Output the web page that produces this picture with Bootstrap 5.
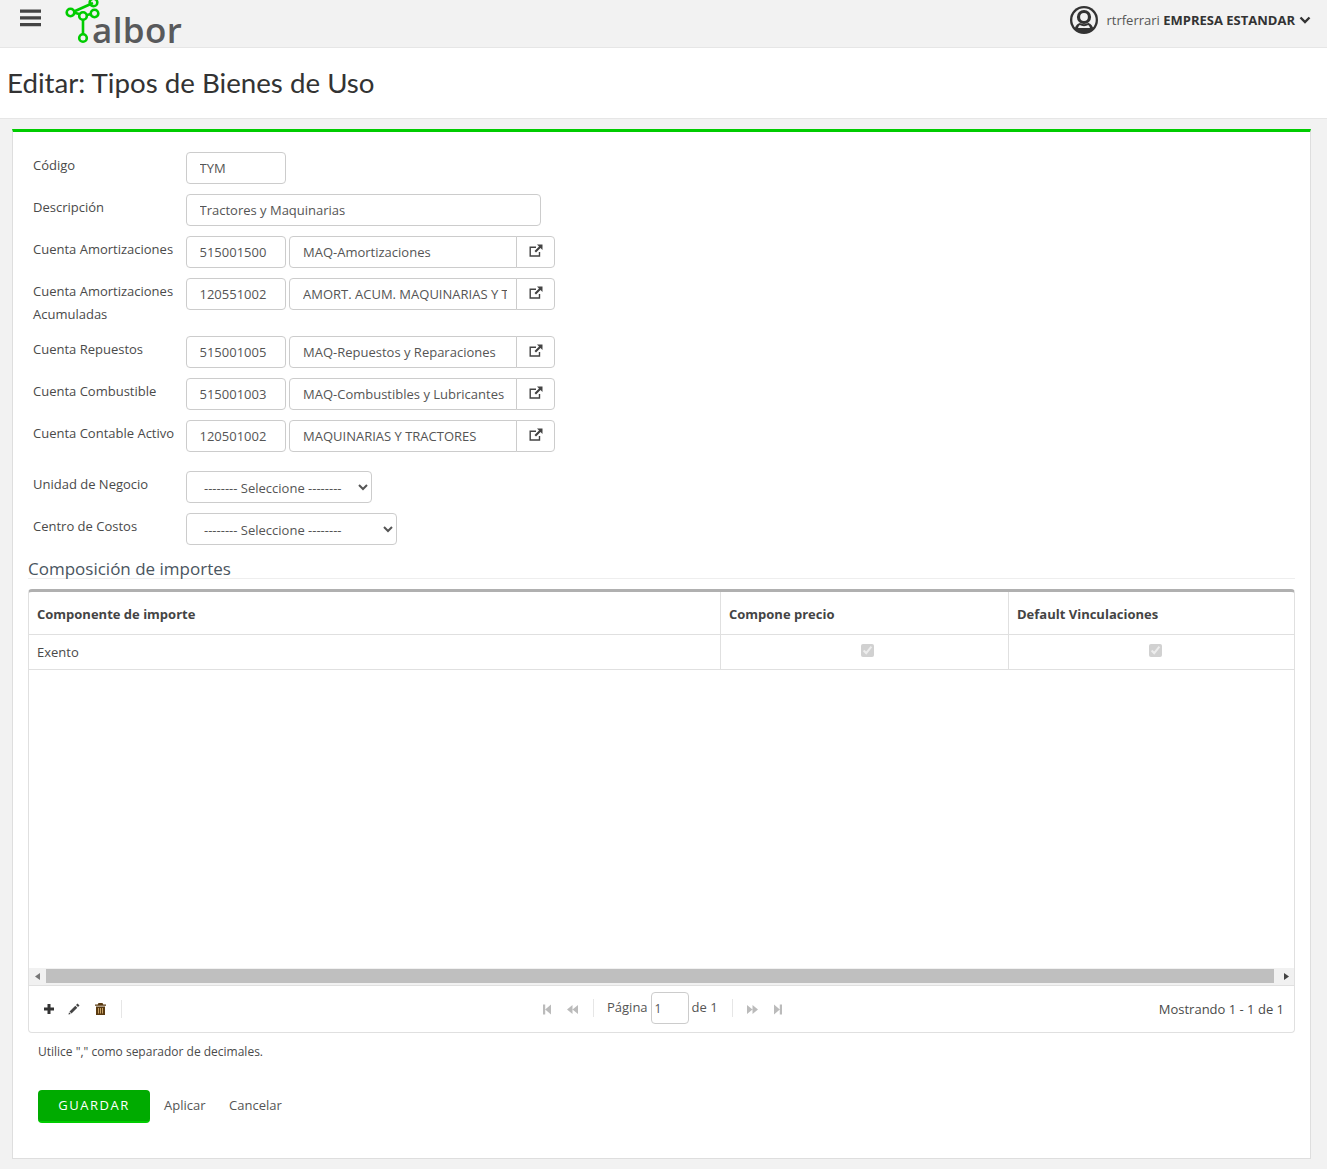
<!DOCTYPE html>
<html lang="es">
<head>
<meta charset="utf-8">
<title>Editar: Tipos de Bienes de Uso</title>
<link href="https://cdn.jsdelivr.net/npm/bootstrap@5.3.0/dist/css/bootstrap.min.css" rel="stylesheet">
<style>
html,body{height:1169px;overflow:hidden}
body{background:#f2f2f2;font-family:"Open Sans",sans-serif;font-size:13px;color:#4a4a4a;line-height:23px}
.top-bar{height:48px;background:#f2f2f2;border-bottom:1px solid #e6e6e6;padding-left:20px}
.burger{width:21px;height:18px;margin-top:9px;margin-right:24px;flex:none}
.logo-mark{width:40px;height:48px;flex:none}
.logo-word{font-family:"Open Sans",sans-serif;font-weight:600;font-size:35px;color:#58595b;line-height:35px;margin-left:-13px;padding-top:12px;letter-spacing:.4px}
.user-box{padding-right:16px;height:40px;color:#555}
.user-box b{color:#333;font-weight:700}
.chev{margin-left:-4px}
.title-band{height:71px;background:#fff;border-bottom:1px solid #e6e6e6;padding-left:7px}
.title-band h1{font-family:Lato,sans-serif;font-size:27.7px;font-weight:400;color:#333;line-height:70px;margin:0}
.sheet{margin:10px 16px 0 12px;height:1030px;background:#fff;border:1px solid #dedede;border-top:3px solid #00cc00;padding:20px 15px 0 15px;box-sizing:border-box}
.frow{display:flex;margin-bottom:10px;padding-left:5px}
.frow-gap{padding-top:9px}
.flabel{width:153px;flex:none;padding-top:2px;color:#4a4a4a}
.frow .form-control,.frow .form-select{height:32px;font-size:13px;color:#555;border:1px solid #ccc;border-radius:4px;padding:0 9px 0 13px;font-family:"Open Sans",sans-serif;box-shadow:none}
.frow .w-code,.frow .w-desc{padding-left:12.5px}
.w-code{width:100px;flex:none}
.w-desc{width:355px;flex:none}
.w-acct{width:266px;flex:none;margin-left:3px}
.w-acct .form-control{width:228px;flex:none;border-radius:4px 0 0 4px!important}
.ext-btn{width:39px;height:32px;border:1px solid #ccc;margin-left:-1px;border-radius:0 4px 4px 0;background:#fff;padding:0 0 3px 0;flex:none;line-height:0}
.frow .form-select{appearance:auto;-webkit-appearance:auto;background-image:none;background-color:#fff;padding:2px 0 0 13px}
.frow .sel-a{width:186px}
.frow .sel-b{width:211px}
.sect-title{font-size:17px;line-height:24px;color:#4a5560;border-bottom:1px solid #eee;height:22px;margin-top:12px;margin-bottom:10px}
.grid-wrap{border:1px solid #e0e0e0;border-top:3px solid #b0b0b0;border-radius:4px;height:444px;display:flex;flex-direction:column}
.grid-head,.grid-line{display:flex;border-bottom:1px solid #e0e0e0}
.grid-head{height:43px;font-weight:700;color:#444;align-items:center}
.grid-head>div{padding-top:2px}
.grid-line{height:35px}
.c1{width:692px;padding-left:8px;border-right:1px solid #e0e0e0;height:100%;flex:none;display:flex;align-items:center}
.c2{width:288px;padding-left:8px;border-right:1px solid #e0e0e0;height:100%;flex:none;display:flex;align-items:center}
.c3{flex:1;padding-left:8px;height:100%;display:flex;align-items:center}
.c2.chk-cell{justify-content:center;padding:0 0 4px 6px}
.c3.chk-cell{justify-content:center;padding:0 0 4px 8px}
.chk-cell input{width:13px;height:13px;margin:0}
.grid-empty{height:298px;flex:none}
.hscroll{height:18px;background:#f1f1f1;border-bottom:1px solid #e0e0e0;flex:none;padding:1px 0 2px 0}
.hscroll svg{width:17px;height:15px;flex:none}
.hthumb{flex:1;background:#bfbfbf;margin-right:3px}
.grid-foot{flex:1;padding:0 10px 0 14px;position:relative}
.foot-sep{width:1px;height:18px;background:#e6e6e6;flex:none}
.tools{gap:13px}
.trash-ic{margin-left:2px}
.tool-sep{margin-left:2px}
.pager{position:absolute;left:514px;top:5px;height:34px;color:#555}
.pager input{width:38px;height:32px;border:1px solid #ccc;border-radius:4px;padding:0 3px;font-size:12px;color:#555;margin:0 3px 0 3px}
.pg-one{width:8px;height:11px;flex:none;margin-top:2px}
.pg-two{width:11px;height:11px;flex:none;margin-top:2px}
.pg-prev{margin-left:16px}
.pg-last{margin-left:16px}
.sep-a{margin:0 13px 0 15px}
.sep-b{margin:0 14px 0 14px}
.pager span{margin-top:-2px}
.note{font-size:12px;padding:7px 0 0 10px;line-height:23px;color:#4a4a4a}
.btn-save{width:112px;height:33px;background:#00ab00;border:0;border-bottom:2px solid #00cc00;color:#fff;font-size:13px;letter-spacing:1.5px;border-radius:4px;padding:0 0 2px 0;line-height:24px}
.btn-save:hover{background:#00ab00;color:#fff}
.act-link{font-size:13px;color:#555;text-decoration:none;margin-top:-2px}
.actions{padding:27px 0 0 10px}
.act-one{margin-left:14px}
.act-two{margin-left:23.500px}
</style>
</head>
<body>
<header class="top-bar d-flex justify-content-between align-items-start">
  <div class="d-flex align-items-start">
    <svg class="burger" viewBox="0 0 21 18" aria-hidden="true"><path fill="#444" d="M0 .5h21v3.200H0zM0 7.200h21v3.200H0zM0 14h21v3.200H0z"/></svg>
    <svg class="logo-mark" viewBox="0 0 40 48" aria-hidden="true"><g fill="none" stroke="#00cc00" stroke-width="2.600"><path d="M9 11.500 28 3M9 12.500l5 1.500M22 15l4-1M18 19v15"/><circle cx="5.500" cy="12.500" r="3.800"/><circle cx="18" cy="16" r="3.800"/><circle cx="29.500" cy="13.500" r="3.800"/><circle cx="28.500" cy="2.500" r="3.800"/><circle cx="18" cy="38" r="3.800"/></g></svg>
    <span class="logo-word">albor</span>
  </div>
  <div class="user-box d-flex align-items-center gap-2">
    <svg width="28" height="28" viewBox="0 0 28 28" aria-hidden="true"><circle cx="14" cy="14" r="14" fill="#333"/><circle cx="14" cy="14" r="11.700" fill="#f2f2f2"/><circle cx="14" cy="11" r="5.500" fill="none" stroke="#333" stroke-width="3.200"/><path d="M4.500 23c1-4 4-6 5.500-6 2 1.500 6 1.500 8 0 1.500 0 4.500 2 5.500 6-5 5-14 5-19 0z" fill="#333"/><path d="M8 22c.500-2 1.500-3 2-3 2 1.500 6 1.500 8 0 .500 0 1.500 1 2 3z" fill="#f2f2f2"/></svg>
    <span>rtrferrari <b>EMPRESA ESTANDAR</b></span>
    <svg class="chev" width="12" height="8" viewBox="0 0 12 8" aria-hidden="true"><path d="M1.500 1.500 6 6l4.500-4.500" fill="none" stroke="#333" stroke-width="2.400"/></svg>
  </div>
</header>
<div class="title-band"><h1>Editar: Tipos de Bienes de Uso</h1></div>
<main class="sheet">
  <svg width="0" height="0" class="position-absolute" aria-hidden="true"><defs>
    <symbol id="ext" viewBox="0 0 14 14"><path d="M10.500 8v4H1.200V3.300H7" fill="none" stroke="#444" stroke-width="1.400"/><path d="M8 .5h5.500V6l-2-2L7 8.500 5.500 7 10 2.500z" fill="#444"/></symbol>
  </defs></svg>
  <div class="frow"><div class="flabel">Código</div><input class="form-control w-code" value="TYM"></div>
  <div class="frow"><div class="flabel">Descripción</div><input class="form-control w-desc" value="Tractores y Maquinarias"></div>
  <div class="frow"><div class="flabel">Cuenta Amortizaciones</div><input class="form-control w-code" value="515001500"><div class="w-acct d-flex"><input class="form-control" value="MAQ-Amortizaciones"><button class="ext-btn" type="button" aria-label="Abrir"><svg width="14" height="14"><use href="#ext"/></svg></button></div></div>
  <div class="frow"><div class="flabel">Cuenta Amortizaciones Acumuladas</div><input class="form-control w-code" value="120551002"><div class="w-acct d-flex"><input class="form-control" value="AMORT. ACUM. MAQUINARIAS Y TRACTORES"><button class="ext-btn" type="button" aria-label="Abrir"><svg width="14" height="14"><use href="#ext"/></svg></button></div></div>
  <div class="frow"><div class="flabel">Cuenta Repuestos</div><input class="form-control w-code" value="515001005"><div class="w-acct d-flex"><input class="form-control" value="MAQ-Repuestos y Reparaciones"><button class="ext-btn" type="button" aria-label="Abrir"><svg width="14" height="14"><use href="#ext"/></svg></button></div></div>
  <div class="frow"><div class="flabel">Cuenta Combustible</div><input class="form-control w-code" value="515001003"><div class="w-acct d-flex"><input class="form-control" value="MAQ-Combustibles y Lubricantes"><button class="ext-btn" type="button" aria-label="Abrir"><svg width="14" height="14"><use href="#ext"/></svg></button></div></div>
  <div class="frow"><div class="flabel">Cuenta Contable Activo</div><input class="form-control w-code" value="120501002"><div class="w-acct d-flex"><input class="form-control" value="MAQUINARIAS Y TRACTORES"><button class="ext-btn" type="button" aria-label="Abrir"><svg width="14" height="14"><use href="#ext"/></svg></button></div></div>
  <div class="frow frow-gap"><div class="flabel">Unidad de Negocio</div><select class="form-select sel-a"><option>-------- Seleccione --------</option></select></div>
  <div class="frow"><div class="flabel">Centro de Costos</div><select class="form-select sel-b"><option>-------- Seleccione --------</option></select></div>
  <div class="sect-title">Composición de importes</div>
  <section class="grid-wrap">
    <div class="grid-head"><div class="c1">Componente de importe</div><div class="c2">Compone precio</div><div class="c3">Default Vinculaciones</div></div>
    <div class="grid-line"><div class="c1">Exento</div><div class="c2 chk-cell"><input type="checkbox" checked disabled aria-label="Compone precio"></div><div class="c3 chk-cell"><input type="checkbox" checked disabled aria-label="Default Vinculaciones"></div></div>
    <div class="grid-empty"></div>
    <div class="hscroll d-flex"><svg viewBox="0 0 17 15" aria-hidden="true"><path d="M11 4v7L6 7.500z" fill="#777"/></svg><div class="hthumb"></div><svg viewBox="0 0 17 15" aria-hidden="true"><path d="M7 4v7l5-3.500z" fill="#444"/></svg></div>
    <div class="grid-foot d-flex align-items-center justify-content-between">
      <div class="d-flex align-items-center tools">
        <svg width="12" height="12" viewBox="0 0 12 12" aria-hidden="true"><path d="M4.500 1h3v3.500H11v3H7.500V11h-3V7.500H1v-3h3.500z" fill="#333"/></svg>
        <svg width="12" height="12" viewBox="0 0 12 12" aria-hidden="true"><path d="M9.500.500 11.500 2.500 10 4 8 2zM7.300 2.700l2 2L3.500 10.500l-2-2zM1 9.200l1.800 1.800-2.300.500z" fill="#444"/></svg>
        <svg class="trash-ic" width="11" height="12" viewBox="0 0 11 12" aria-hidden="true"><path fill="#5a3a10" d="M3.500 0h4l.8 1.500H11v1.300H0V1.500h2.700zM1 3.500h9V12H1z"/><path stroke="#c9a468" d="M3.500 5v5.500M5.500 5v5.500M7.500 5v5.500"/></svg>
        <div class="foot-sep tool-sep"></div>
      </div>
      <div class="pager d-flex align-items-center">
        <svg class="pg-one" viewBox="0 0 8 11" aria-hidden="true"><path d="M0 .5h2.200v10H0zM8 .5v10L2.200 5.500z" fill="#bbb"/></svg>
        <svg class="pg-two pg-prev" viewBox="0 0 11 11" aria-hidden="true"><path d="M5.500 1v9L0 5.500zM11 1v9L5.500 5.500z" fill="#bbb"/></svg>
        <div class="foot-sep sep-a"></div>
        <span>Página</span><input value="1" aria-label="Página"><span>de 1</span>
        <div class="foot-sep sep-b"></div>
        <svg class="pg-two" viewBox="0 0 11 11" aria-hidden="true"><path d="M0 1v9l5.500-4.500zM5.500 1v9L11 5.500z" fill="#bbb"/></svg>
        <svg class="pg-one pg-last" viewBox="0 0 8 11" aria-hidden="true"><path d="M8 .5H5.800v10H8zM0 .5v10l5.800-5z" fill="#bbb"/></svg>
      </div>
      <div>Mostrando 1 - 1 de 1</div>
    </div>
  </section>
  <div class="note">Utilice "," como separador de decimales.</div>
  <div class="actions d-flex align-items-center">
    <button class="btn btn-save" type="button">GUARDAR</button>
    <a class="act-link act-one" href="#">Aplicar</a>
    <a class="act-link act-two" href="#">Cancelar</a>
  </div>
</main>
<script src="https://cdn.jsdelivr.net/npm/bootstrap@5.3.0/dist/js/bootstrap.bundle.min.js"></script>
</body>
</html>
